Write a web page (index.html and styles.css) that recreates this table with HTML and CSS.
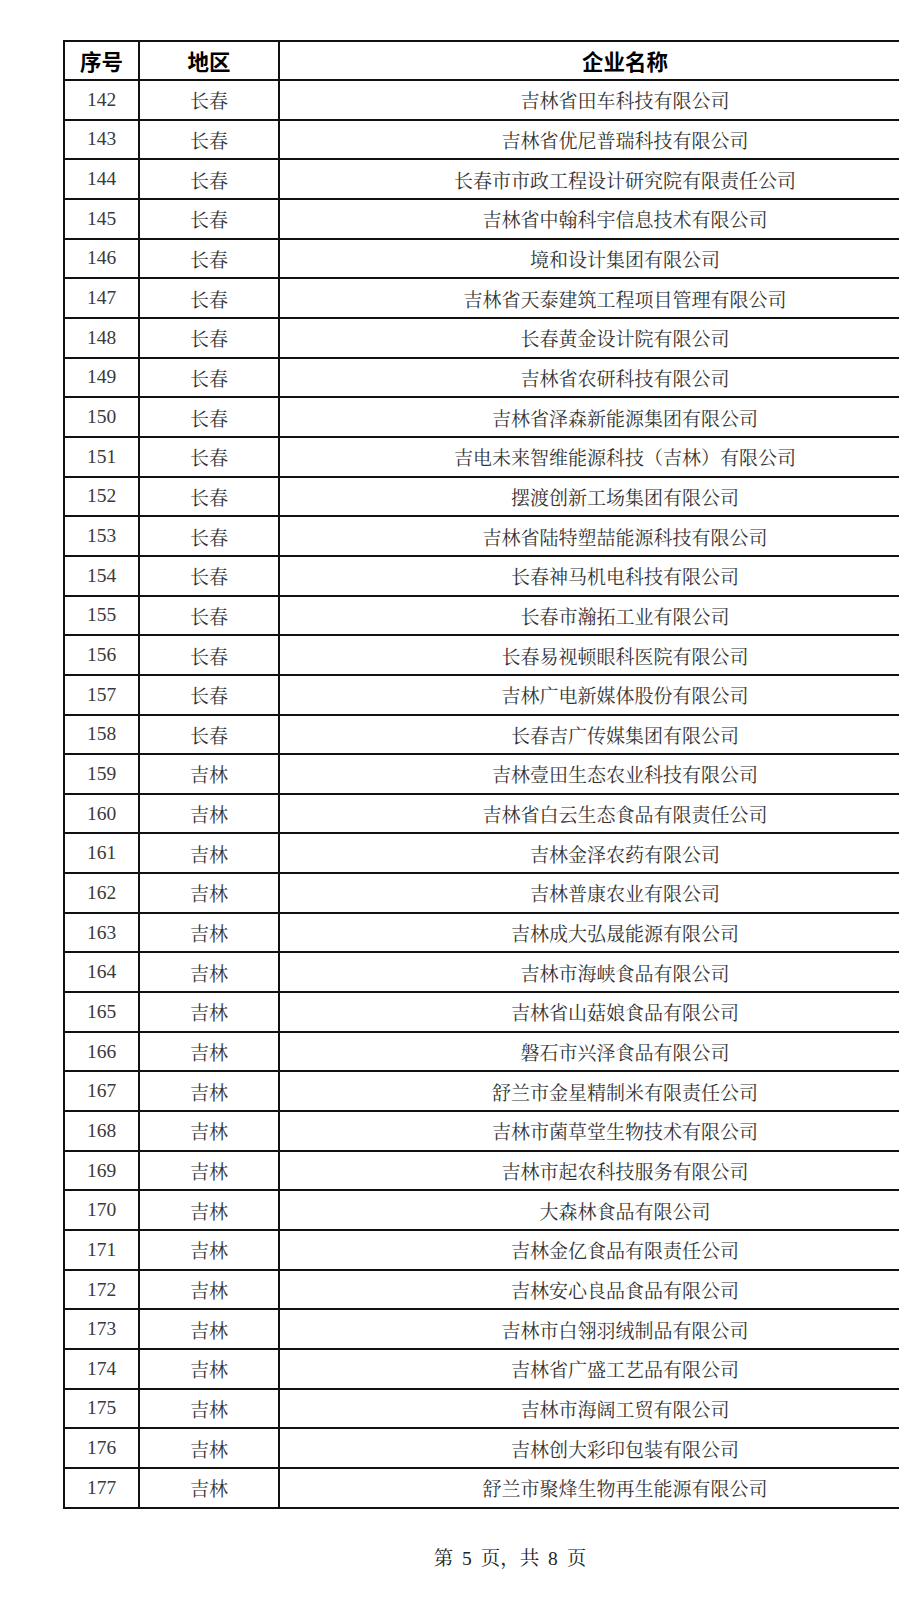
FILE: index.html
```html
<!DOCTYPE html>
<html lang="zh-CN">
<head>
<meta charset="utf-8">
<title>企业名单 第5页</title>
<link rel="stylesheet" href="styles.css">
</head>
<body>
<div class="page">
  <div class="sheet">
    <div class="cell head">序号</div><div class="cell head">地区</div><div class="cell head">企业名称</div>
    <div class="cell num">142</div><div class="cell">长春</div><div class="cell">吉林省田车科技有限公司</div>
    <div class="cell num">143</div><div class="cell">长春</div><div class="cell">吉林省优尼普瑞科技有限公司</div>
    <div class="cell num">144</div><div class="cell">长春</div><div class="cell">长春市市政工程设计研究院有限责任公司</div>
    <div class="cell num">145</div><div class="cell">长春</div><div class="cell">吉林省中翰科宇信息技术有限公司</div>
    <div class="cell num">146</div><div class="cell">长春</div><div class="cell">境和设计集团有限公司</div>
    <div class="cell num">147</div><div class="cell">长春</div><div class="cell">吉林省天泰建筑工程项目管理有限公司</div>
    <div class="cell num">148</div><div class="cell">长春</div><div class="cell">长春黄金设计院有限公司</div>
    <div class="cell num">149</div><div class="cell">长春</div><div class="cell">吉林省农研科技有限公司</div>
    <div class="cell num">150</div><div class="cell">长春</div><div class="cell">吉林省泽森新能源集团有限公司</div>
    <div class="cell num">151</div><div class="cell">长春</div><div class="cell">吉电未来智维能源科技（吉林）有限公司</div>
    <div class="cell num">152</div><div class="cell">长春</div><div class="cell">摆渡创新工场集团有限公司</div>
    <div class="cell num">153</div><div class="cell">长春</div><div class="cell">吉林省陆特塑喆能源科技有限公司</div>
    <div class="cell num">154</div><div class="cell">长春</div><div class="cell">长春神马机电科技有限公司</div>
    <div class="cell num">155</div><div class="cell">长春</div><div class="cell">长春市瀚拓工业有限公司</div>
    <div class="cell num">156</div><div class="cell">长春</div><div class="cell">长春易视顿眼科医院有限公司</div>
    <div class="cell num">157</div><div class="cell">长春</div><div class="cell">吉林广电新媒体股份有限公司</div>
    <div class="cell num">158</div><div class="cell">长春</div><div class="cell">长春吉广传媒集团有限公司</div>
    <div class="cell num">159</div><div class="cell">吉林</div><div class="cell">吉林壹田生态农业科技有限公司</div>
    <div class="cell num">160</div><div class="cell">吉林</div><div class="cell">吉林省白云生态食品有限责任公司</div>
    <div class="cell num">161</div><div class="cell">吉林</div><div class="cell">吉林金泽农药有限公司</div>
    <div class="cell num">162</div><div class="cell">吉林</div><div class="cell">吉林普康农业有限公司</div>
    <div class="cell num">163</div><div class="cell">吉林</div><div class="cell">吉林成大弘晟能源有限公司</div>
    <div class="cell num">164</div><div class="cell">吉林</div><div class="cell">吉林市海峡食品有限公司</div>
    <div class="cell num">165</div><div class="cell">吉林</div><div class="cell">吉林省山菇娘食品有限公司</div>
    <div class="cell num">166</div><div class="cell">吉林</div><div class="cell">磐石市兴泽食品有限公司</div>
    <div class="cell num">167</div><div class="cell">吉林</div><div class="cell">舒兰市金星精制米有限责任公司</div>
    <div class="cell num">168</div><div class="cell">吉林</div><div class="cell">吉林市菌草堂生物技术有限公司</div>
    <div class="cell num">169</div><div class="cell">吉林</div><div class="cell">吉林市起农科技服务有限公司</div>
    <div class="cell num">170</div><div class="cell">吉林</div><div class="cell">大森林食品有限公司</div>
    <div class="cell num">171</div><div class="cell">吉林</div><div class="cell">吉林金亿食品有限责任公司</div>
    <div class="cell num">172</div><div class="cell">吉林</div><div class="cell">吉林安心良品食品有限公司</div>
    <div class="cell num">173</div><div class="cell">吉林</div><div class="cell">吉林市白翎羽绒制品有限公司</div>
    <div class="cell num">174</div><div class="cell">吉林</div><div class="cell">吉林省广盛工艺品有限公司</div>
    <div class="cell num">175</div><div class="cell">吉林</div><div class="cell">吉林市海阔工贸有限公司</div>
    <div class="cell num">176</div><div class="cell">吉林</div><div class="cell">吉林创大彩印包装有限公司</div>
    <div class="cell num">177</div><div class="cell">吉林</div><div class="cell">舒兰市聚烽生物再生能源有限公司</div>
  </div>
  <div class="footer">第 5 页，共 8 页</div>
</div>
</body>
</html>
```
FILE: styles.css
```css
html, body {
  margin: 0;
  padding: 0;
  background: #ffffff;
  overflow: hidden;
}
.page {
  width: 899px;
  height: 1600px;
  overflow: hidden;
  padding: 40px 0 0 63px;
  box-sizing: border-box;
}
.sheet {
  display: grid;
  grid-template-columns: 73px 138px 690px;
  grid-template-rows: 37px;
  grid-auto-rows: 37.67px;
  gap: 2px;
  padding: 2px;
  background: #111111;
  width: max-content;
}
.cell {
  background: #ffffff;
  display: flex;
  align-items: center;
  justify-content: center;
  font-family: "Liberation Serif", "Noto Serif CJK SC", "Noto Sans CJK SC", serif;
  font-size: 19px;
  color: #333333;
  white-space: nowrap;
}
.cell.num {
  font-size: 19.5px;
  color: #3a3a3a;
}
.cell.head {
  font-family: "Noto Sans CJK SC", sans-serif;
  font-weight: 700;
  font-size: 21.5px;
  color: #000000;
}
.footer {
  width: 894px;
  margin-top: 34px;
  text-align: center;
  font-family: "Liberation Serif", "Noto Serif CJK SC", "Noto Sans CJK SC", serif;
  font-size: 19.5px;
  word-spacing: 4px;
  color: #222222;
}
```
